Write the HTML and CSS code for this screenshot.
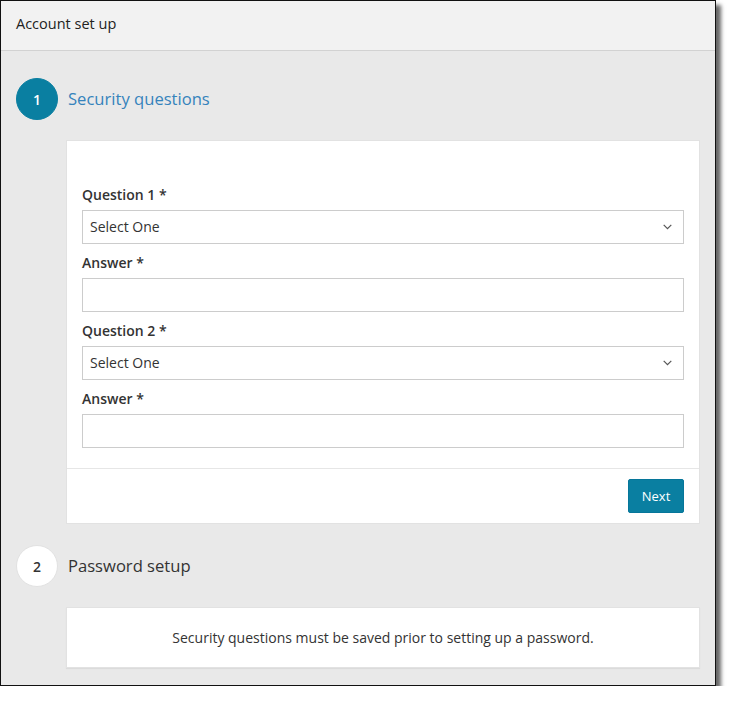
FILE: index.html
```html
<!DOCTYPE html>
<html>
<head>
<meta charset="utf-8">
<link rel="stylesheet" href="styles.css">
</head>
<body>
<div class="window">
  <div class="header">Account set up</div>
  <div class="content">
    <div class="step">
      <div class="num active">1</div>
      <div class="step-title active">Security questions</div>
    </div>
    <div class="card">
      <div class="card-body">
        <div class="field">
          <label class="label">Question 1 *</label>
          <div class="select"><span>Select One</span>
            <svg class="chev" width="9" height="6" viewBox="0 0 9 6"><polyline points="0.7,0.8 4.5,4.6 8.3,0.8" fill="none" stroke="#555" stroke-width="1.2"/></svg>
          </div>
        </div>
        <div class="field">
          <label class="label">Answer *</label>
          <div class="input"></div>
        </div>
        <div class="field">
          <label class="label">Question 2 *</label>
          <div class="select"><span>Select One</span>
            <svg class="chev" width="9" height="6" viewBox="0 0 9 6"><polyline points="0.7,0.8 4.5,4.6 8.3,0.8" fill="none" stroke="#555" stroke-width="1.2"/></svg>
          </div>
        </div>
        <div class="field">
          <label class="label">Answer *</label>
          <div class="input"></div>
        </div>
      </div>
      <div class="card-footer">
        <button class="btn">Next</button>
      </div>
    </div>
    <div class="step step2">
      <div class="num">2</div>
      <div class="step-title">Password setup</div>
    </div>
    <div class="card note">Security questions must be saved prior to setting up a password.</div>
  </div>
</div>
</body>
</html>
```

FILE: styles.css
```css
html, body {
  margin: 0;
  padding: 0;
  background: #fff;
}
body {
  font-family: "Open Sans", "Noto Sans", sans-serif;
  color: #333;
}
.window {
  box-sizing: border-box;
  width: 716px;
  height: 686px;
  border: 1px solid #111;
  background: #e9e9e9;
  box-shadow: 5px 5px 4px rgba(0, 0, 0, 0.6);
  overflow: hidden;
}
.header {
  background: #f2f2f2;
  border-bottom: 1px solid #d2d2d2;
  font-size: 14.5px;
  line-height: 19px;
  padding: 13px 15px 17px;
  color: #222;
}
.content {
  padding: 27px 15px 0 15px;
}
.step {
  display: flex;
  align-items: center;
  height: 42px;
}
.num {
  width: 42px;
  height: 42px;
  border-radius: 50%;
  background: #fff;
  box-sizing: border-box;
  border: 1px solid #e2e2e2;
  display: flex;
  align-items: center;
  justify-content: center;
  font-size: 14px;
  font-weight: 600;
  color: #333;
}
.num.active {
  background: #0a7fa1;
  border-color: #0a7fa1;
  color: #fff;
}
.step-title {
  margin-left: 10px;
  font-size: 16.6px;
  color: #333;
  padding-bottom: 1px;
}
.step-title.active {
  color: #3583bc;
}
.card {
  margin: 20px 0 0 50px;
  background: #fff;
  border: 1px solid #e2e2e2;
}
.card-body {
  padding: 43px 15px 20px;
}
.field {
  display: flex;
  flex-direction: column;
}
.field + .field {
  margin-top: 8px;
}
.label {
  font-size: 14px;
  font-weight: 600;
  line-height: 19px;
  color: #333;
  padding-top: 1px;
  margin-bottom: 6px;
}
.select, .input {
  box-sizing: border-box;
  height: 34px;
  border: 1px solid #cccccc;
  background: #fff;
}
.select {
  display: flex;
  align-items: center;
  justify-content: space-between;
  padding: 0 11px 1px 7px;
  font-size: 14px;
  color: #333;
}
.chev {
  display: block;
  margin-top: 1px;
}
.card-footer {
  border-top: 1px solid #e6e6e6;
  padding: 10px 15px;
  display: flex;
  justify-content: flex-end;
}
.btn {
  font-family: "Open Sans", "Noto Sans", sans-serif;
  height: 34px;
  width: 56px;
  border: 1px solid #06769a;
  border-radius: 2px;
  background: #0a7fa1;
  color: #fff;
  font-size: 13px;
  padding: 0;
}
.step2 {
  margin-top: 21px;
}
.note {
  padding: 20px 15px;
  text-align: center;
  font-size: 14px;
  line-height: 19px;
  box-shadow: 0 1px 1px rgba(0, 0, 0, 0.06);
}
```
